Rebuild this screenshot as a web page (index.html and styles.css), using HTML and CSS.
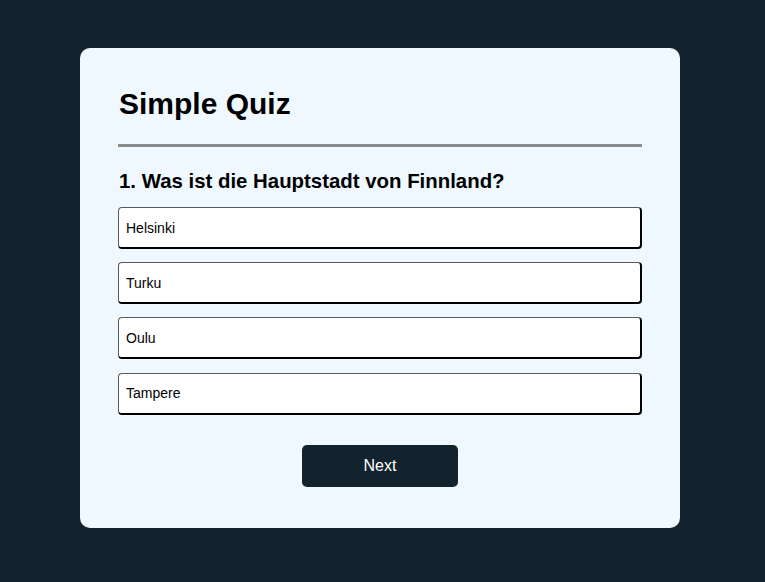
FILE: index.html
```
<!DOCTYPE html>
<html lang="de">
<head>
<meta charset="utf-8">
<title>Simple Quiz</title>
<link rel="stylesheet" href="styles.css">
</head>
<body>
<div class="app">
  <h1 class="title">Simple Quiz</h1>
  <div class="rule"></div>
  <div class="quiz">
    <h2 class="question">1. Was ist die Hauptstadt von Finnland?</h2>
    <div class="answers">
      <button class="answer">Helsinki</button>
      <button class="answer">Turku</button>
      <button class="answer">Oulu</button>
      <button class="answer">Tampere</button>
    </div>
    <button class="next">Next</button>
  </div>
</div>
</body>
</html>
```
FILE: styles.css
```
* { box-sizing: border-box; }
html, body { margin: 0; padding: 0; }
body {
  background: #13232e;
  font-family: "Liberation Sans", Arial, sans-serif;
  padding-top: 48px;
}
.app {
  width: 600px;
  margin: 0 0 0 80px;
  background: #eff7ff;
  border-radius: 10px;
  padding: 40px 38px 41px 38px;
}
.title {
  margin: 0;
  font-size: 30px;
  font-weight: bold;
  color: #000;
  line-height: 32px;
  padding-left: 1px;
}
.rule {
  height: 3px;
  background: #8c8c8c;
  margin-top: 24px;
}
.quiz { margin-top: 23px; }
.question {
  margin: 0;
  font-size: 20.4px;
  font-weight: bold;
  line-height: 23px;
  color: #000;
  padding-left: 1px;
}
.answers {
  display: flex;
  flex-direction: column;
  gap: 13.2px;
  margin-top: 14px;
}
.answer {
  display: block;
  width: 100%;
  height: 42px;
  background: #fff;
  color: #000;
  font-family: "Liberation Sans", Arial, sans-serif;
  font-size: 14px;
  text-align: left;
  padding: 0 7px;
  border-style: solid;
  border-width: 1px 2px 2px 1px;
  border-color: #5a5a5a #000 #000 #5a5a5a;
  border-radius: 4px;
}
.next {
  display: block;
  width: 156px;
  height: 42px;
  margin: 30px auto 0;
  background: #13232e;
  color: #fff;
  border: 0;
  border-radius: 5px;
  font-family: "Liberation Sans", Arial, sans-serif;
  font-size: 16px;
}
```
